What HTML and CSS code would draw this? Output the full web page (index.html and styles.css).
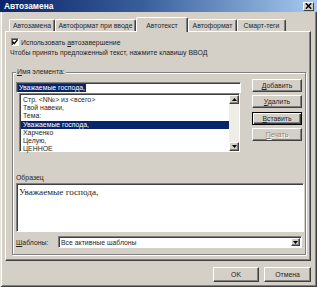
FILE: index.html
```html
<!DOCTYPE html>
<html>
<head>
<meta charset="utf-8">
<link rel="stylesheet" href="styles.css">
</head>
<body>
<div class="window">
  <div class="titlebar">
    <span class="title">Автозамена</span>
    <span class="close"><svg width="7" height="6" viewBox="0 0 7 6"><path d="M0.8 0.3 L6.2 5.7 M6.2 0.3 L0.8 5.7" stroke="#000" stroke-width="1.5"/></svg></span>
  </div>
  <div class="tabs">
    <div class="tab t1">Автозамена</div>
    <div class="tab t2">Автоформат при вводе</div>
    <div class="tab t3 active">Автотекст</div>
    <div class="tab t4">Автоформат</div>
    <div class="tab t5">Смарт-теги</div>
  </div>
  <div class="panel">
    <div class="chkrow">
      <span class="chk"><svg width="6" height="6" viewBox="0 0 6 6"><path d="M0.6 2.8 L2.3 4.6 L5.4 0.9" fill="none" stroke="#000" stroke-width="1.4"/></svg></span>
      <span>Использовать <u>а</u>втозавершение</span>
    </div>
    <div class="info">Чтобы принять предложенный текст, нажмите клавишу ВВОД</div>
    <fieldset class="group">
      <legend><u>И</u>мя элемента:</legend>
      <div class="mainrow">
        <div class="leftcol">
          <div class="input"><span class="sel">Уважаемые господа,</span></div>
          <div class="list">
            <div class="items">
              <div class="item">Стр. &lt;N№&gt; из &lt;всего&gt;</div>
              <div class="item">Твой навеки,</div>
              <div class="item">Тема:</div>
              <div class="item current">Уважаемые господа,</div>
              <div class="item">Харченко</div>
              <div class="item">Целую,</div>
              <div class="item">ЦЕННОЕ</div>
            </div>
            <div class="scroll">
              <div class="arrow"><svg width="5" height="3" viewBox="0 0 5 3"><path d="M2.5 0 L5 3 L0 3 Z" fill="#000"/></svg></div>
              <div class="track"></div>
              <div class="arrow"><svg width="5" height="3" viewBox="0 0 5 3"><path d="M0 0 L5 0 L2.5 3 Z" fill="#000"/></svg></div>
            </div>
          </div>
        </div>
        <div class="btncol">
          <div class="btn side"><span><u>Д</u>обавить</span></div>
          <div class="btn side"><span><u>У</u>далить</span></div>
          <div class="btn side default"><span><u>В</u>ставить</span></div>
          <div class="btn side disabled"><span><u>П</u>ечать</span></div>
        </div>
      </div>
      <div class="samplelabel">Образец</div>
      <div class="sample">Уважаемые господа,</div>
      <div class="tplrow">
        <span class="tpllabel"><u>Ш</u>аблоны:</span>
        <div class="select">
          <span class="seltext">Все активные шаблоны</span>
          <span class="ddbtn"><svg width="5" height="3" viewBox="0 0 5 3"><path d="M0 0 L5 0 L2.5 3 Z" fill="#000"/></svg></span>
        </div>
      </div>
    </fieldset>
  </div>
  <div class="footer">
    <div class="btn ok">OK</div>
    <div class="btn cancel">Отмена</div>
  </div>
</div>
</body>
</html>
```
FILE: styles.css
```css
html, body {
  margin: 0;
  padding: 0;
}
body {
  width: 317px;
  height: 287px;
  overflow: hidden;
  background: #d4d0c8;
  font-family: "Liberation Sans", Arial, sans-serif;
  font-size: 6.9px;
  color: #262626;
}
u {
  text-decoration: underline;
  text-underline-offset: 1px;
}
.window {
  width: 317px;
  height: 287px;
  box-sizing: border-box;
  box-shadow: inset 1px 0 #e4e2dc, inset -1px -1px #404040, inset 2px 0 #ffffff, inset -2px -2px #808080;
  overflow: hidden;
}
.titlebar {
  height: 12px;
  display: flex;
  align-items: center;
  justify-content: space-between;
  padding: 0 3px 0 4px;
  background: linear-gradient(to right, #0a246a 0%, #3a5e9c 45%, #a6caf0 100%);
}
.title {
  color: #ffffff;
  font-weight: bold;
  font-size: 8.4px;
  line-height: 12px;
}
.close {
  width: 11px;
  height: 9px;
  box-sizing: border-box;
  background: #d4d0c8;
  border: 1px solid;
  border-color: #ffffff #404040 #404040 #ffffff;
  display: flex;
  align-items: center;
  justify-content: center;
}
.tabs {
  display: flex;
  align-items: flex-end;
  height: 14px;
  margin: 5px 0 0 9px;
}
.tab {
  height: 12px;
  box-sizing: border-box;
  border: 1px solid;
  border-bottom: none;
  border-color: #ffffff #404040 transparent #ffffff;
  border-radius: 2px 2px 0 0;
  box-shadow: inset -1px 0 #808080;
  display: flex;
  align-items: center;
  justify-content: center;
  white-space: nowrap;
}
.tab.active {
  height: 15px;
  margin-bottom: -1px;
  position: relative;
  z-index: 1;
  background: #d4d0c8;
}
.t1 { width: 46px; }
.t2 { width: 81px; }
.t3 { width: 52px; }
.t4 { width: 49px; }
.t5 { width: 49px; }
.panel {
  margin-left: 5px;
  width: 306px;
  height: 230px;
  box-sizing: border-box;
  border: 1px solid;
  border-color: #ffffff #404040 #404040 #ffffff;
  box-shadow: inset -1px -1px #808080;
}
.chkrow {
  display: flex;
  align-items: center;
  height: 8px;
  margin-top: 6px;
  padding-left: 5px;
  gap: 2px;
}
.chk {
  width: 8px;
  height: 8px;
  box-sizing: border-box;
  background: #ffffff;
  border: 1px solid;
  border-color: #808080 #ffffff #ffffff #808080;
  box-shadow: inset 1px 1px #404040;
  display: flex;
  align-items: center;
  justify-content: center;
}
.info {
  margin-top: 3px;
  height: 8px;
  line-height: 8px;
  padding-left: 4px;
  white-space: nowrap;
}
.group {
  margin: 11px 0 0 6px;
  width: 294px;
  box-sizing: border-box;
  padding: 0 0 6px 3px;
  min-width: 0;
  border: 1px solid #808080;
  box-shadow: inset 1px 1px #ffffff, 1px 1px #ffffff;
}
.group legend {
  padding: 0 1px;
  margin: 0;
  line-height: 8px;
  background: #d4d0c8;
}
.mainrow {
  display: flex;
  margin-top: 3px;
}
.leftcol {
  width: 225px;
  margin-top: 3px;
}
.input {
  height: 11px;
  box-sizing: border-box;
  background: #ffffff;
  border: 1px solid;
  border-color: #808080 #ffffff #ffffff #808080;
  box-shadow: inset 1px 1px #404040;
  padding: 1px 0 0 1px;
  display: flex;
}
.sel {
  background: #0a246a;
  color: #ffffff;
  line-height: 8px;
  height: 8px;
  padding: 0 1px;
}
.list {
  margin-left: 3px;
  width: 221px;
  height: 59px;
  box-sizing: border-box;
  background: #ffffff;
  border: 1px solid;
  border-color: #808080 #ffffff #ffffff #808080;
  box-shadow: inset 1px 1px #404040;
  display: flex;
  padding: 1px 0 0 1px;
}
.items {
  flex: 1;
  padding-top: 1px;
}
.item {
  height: 8.2px;
  line-height: 8.2px;
  padding-left: 2px;
  white-space: nowrap;
}
.item.current {
  background: #0a246a;
  color: #ffffff;
}
.scroll {
  width: 10px;
  display: flex;
  flex-direction: column;
}
.arrow {
  height: 9px;
  box-sizing: border-box;
  background: #d4d0c8;
  border: 1px solid;
  border-color: #ffffff #404040 #404040 #ffffff;
  box-shadow: inset -1px -1px #808080;
  display: flex;
  align-items: center;
  justify-content: center;
}
.track {
  flex: 1;
  background: #eeede8;
}
.btncol {
  margin-left: 11px;
  width: 50px;
  display: flex;
  flex-direction: column;
  gap: 3.4px;
}
.btn {
  box-sizing: border-box;
  background: #d4d0c8;
  border: 1px solid;
  border-color: #ffffff #404040 #404040 #ffffff;
  box-shadow: inset -1px -1px #808080;
  display: flex;
  align-items: center;
  justify-content: center;
  white-space: nowrap;
}
.btn.side {
  height: 13px;
}
.btn.default {
  border-color: #000000;
  box-shadow: inset 1px 1px #ffffff, inset -1px -1px #404040, inset -2px -2px #808080;
}
.btn.disabled {
  color: #8a8880;
  text-shadow: 1px 1px #ffffff;
}
.samplelabel {
  margin-top: 22px;
  line-height: 8px;
  height: 8px;
}
.sample {
  margin-top: 1px;
  width: 288px;
  height: 49px;
  box-sizing: border-box;
  background: #ffffff;
  border: 1px solid;
  border-color: #808080 #ffffff #ffffff #808080;
  box-shadow: inset 1px 1px #404040;
  padding: 3px 2px;
  font-family: "Liberation Serif", "Times New Roman", serif;
  font-size: 9.2px;
  color: #222;
}
.tplrow {
  margin-top: 4px;
  height: 12px;
  display: flex;
  align-items: center;
}
.tpllabel {
  width: 42px;
}
.select {
  width: 244px;
  height: 12px;
  box-sizing: border-box;
  background: #ffffff;
  border: 1px solid;
  border-color: #808080 #ffffff #ffffff #808080;
  box-shadow: inset 1px 1px #404040;
  display: flex;
  align-items: center;
  justify-content: space-between;
  padding: 0 1px 0 2px;
}
.ddbtn {
  width: 9px;
  height: 8px;
  box-sizing: border-box;
  background: #d4d0c8;
  border: 1px solid;
  border-color: #ffffff #404040 #404040 #ffffff;
  box-shadow: inset -1px -1px #808080;
  display: flex;
  align-items: center;
  justify-content: center;
}
.footer {
  display: flex;
  justify-content: flex-end;
  gap: 5px;
  padding: 6px 6px 0 0;
}
.btn.ok {
  width: 46px;
  height: 15px;
}
.btn.cancel {
  width: 47px;
  height: 15px;
}
```
